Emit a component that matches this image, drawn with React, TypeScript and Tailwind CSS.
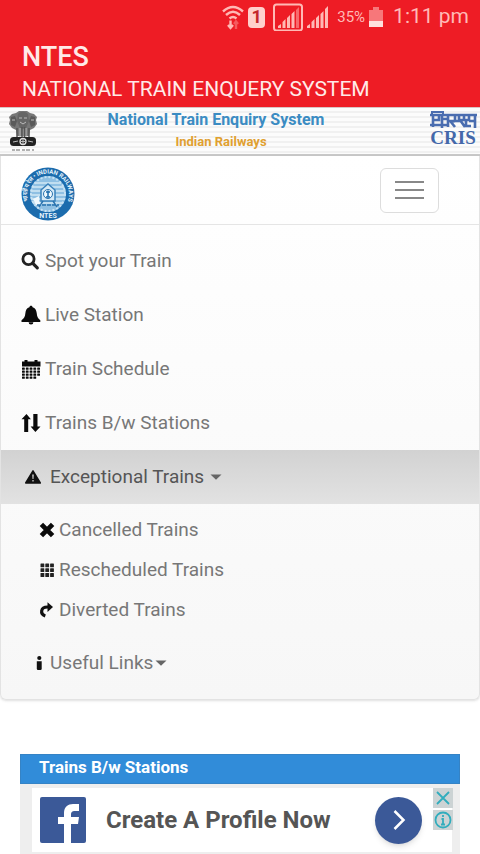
import React from 'react';

interface MenuItem {
  label: string;
  icon: React.ReactNode;
}

const SearchIcon = () => (
  <svg viewBox="0 0 20 20" className="size-5" fill="none" stroke="#222" strokeWidth="2.8">
    <circle cx="7.5" cy="8" r="5.6" />
    <path d="M11.8 12.3 16.3 16.8" strokeWidth="3.2" strokeLinecap="round" />
  </svg>
);

const BellIcon = () => (
  <svg viewBox="0 0 20 20" className="size-5" fill="#0a0a0a">
    <path d="M10 .8c1 0 1.5.6 1.6 1.5C14.2 3 15.3 5 15.7 8c.4 3.6 1 5.5 3.6 7.2v1.700H.5v-1.700C3.300 13.500 4 11.600 4.400 8c.3-3 1.400-5 4-5.700C8.500 1.400 9 .8 10 .8Z" />
    <path d="M7.600 17.200h4.800a2.400 2.200 0 0 1-4.800 0Z" />
  </svg>
);

const CalendarIcon = () => (
  <svg viewBox="0 0 20 20" className="size-5" fill="#0a0a0a">
    <path d="M1 2.500h2.500V1h3v1.500h7V1h3v1.500H19.500V7.500H1Z" />
    {[8.6, 11.6, 14.6, 17.6].map((y) =>
      [1, 4.8, 8.6, 12.4, 16.2].map((x) =>
        y === 17.6 && x > 13 ? null : <rect key={`${x}-${y}`} x={x} y={y} width="2.8" height="2.1" rx="0.5" />
      )
    )}
  </svg>
);

const ArrowsIcon = () => (
  <svg viewBox="0 0 20 20" className="size-5" fill="#0a0a0a">
    <path d="M5.500 1 .5 6.200h2.700V19h4V6.200h2.700ZM12.300 1h4.200v12.600H19.500L14.400 19l-4.800-5.400h2.700Z" />
  </svg>
);

const WarningIcon = () => (
  <svg viewBox="0 0 16 16" className="size-4">
    <path d="M8 1.800 15.300 14H.7Z" fill="#111" stroke="#111" strokeWidth="1.5" strokeLinejoin="round" />
    <path d="M7 5.500h2l-.4 4.500H7.400ZM7.200 11h1.600v1.600H7.200Z" fill="#aaa" />
  </svg>
);

const CrossIcon = () => (
  <svg viewBox="0 0 16 16" className="size-4" stroke="#0a0a0a" strokeWidth="4.8">
    <path d="m2.400 2.400 11.200 11.200M13.600 2.400 2.400 13.600" />
  </svg>
);

const GridIcon = () => (
  <svg viewBox="0 0 16 16" className="size-4" fill="#222">
    {[1.5, 6.3, 11.1].map((y) =>
      [1.5, 6.3, 11.1].map((x) => <rect key={`${x}-${y}`} x={x} y={y} width="3.8" height="3.8" rx="0.5" />)
    )}
  </svg>
);

const DivertIcon = () => (
  <svg viewBox="0 0 16 16" className="size-4">
    <path d="M6.300 14C.8 12 1.500 5 8.500 5h1" fill="none" stroke="#111" strokeWidth="3.2" />
    <path d="M8.500.2 14 5 8.500 9.900Z" fill="#111" />
  </svg>
);

const InfoIcon = () => (
  <svg viewBox="0 0 8 16" className="h-4 w-2" fill="#111">
    <circle cx="4.3" cy="3" r="2.1" />
    <path d="M1.800 6.200H6.700v7.600q0 1.200-1.200 1.200H3q-1.200 0-1.200-1.200Z" />
  </svg>
);

const Caret = () => (
  <svg viewBox="0 0 12 6" className="h-1.5 w-3" fill="#666">
    <path d="M.5.5h11L6 5.800Z" />
  </svg>
);

const mainItems: MenuItem[] = [
  { label: 'Spot your Train', icon: <SearchIcon /> },
  { label: 'Live Station', icon: <BellIcon /> },
  { label: 'Train Schedule', icon: <CalendarIcon /> },
  { label: 'Trains B/w Stations', icon: <ArrowsIcon /> },
];

const exceptionalItems: MenuItem[] = [
  { label: 'Cancelled Trains', icon: <CrossIcon /> },
  { label: 'Rescheduled Trains', icon: <GridIcon /> },
  { label: 'Diverted Trains', icon: <DivertIcon /> },
];

function StatusBar() {
  return (
    <div className="flex h-[34px] items-center justify-end pr-[11px] text-[#ffb9b5]">
      <svg viewBox="0 0 22 26" className="mr-1 h-[26px] w-[22px]" fill="none" stroke="currentColor" strokeWidth="2.4">
        <path d="M1 7.500Q11-1.500 21 7.500M4 11q7-6.500 14 0M7.500 14.500q3.500-3 7 0" />
        <path d="M8.500 16.500v7M6 21l2.500 3 2.500-3" />
        <path d="M14 25v-7M12 20l2-2.500 2 2.500" opacity="0.4" />
      </svg>
      <span className="mr-2 flex h-[21px] w-[17px] items-center justify-center rounded-sm bg-[#ffd0cc] text-lg font-bold text-[#c3272b]">
        1
      </span>
      <svg viewBox="0 0 30 28" className="mr-1 h-7 w-[30px]" fill="currentColor">
        <rect x="1" y="1.5" width="28" height="26" rx="2.5" fill="none" stroke="currentColor" strokeWidth="2" />
        <path d="M5 25v-2l3-2v4ZM9.500 25v-6l3-3v9ZM14 25V15l3-3v13ZM18.500 25V11l3-3v17Z" />
        <path d="M23 25V7l3-3v21Z" opacity="0.5" />
      </svg>
      <svg viewBox="0 0 22 24" className="mr-2 h-6 w-[22px]" fill="currentColor">
        <path d="M0 23v-2l3-2v4ZM4.500 23v-6l3-3v9ZM9 23V13l3-3v13ZM13.500 23V9l3-3v17ZM18 23V4l3-3v22Z" />
      </svg>
      <span className="text-[15px]">35%</span>
      <svg viewBox="0 0 14 22" className="ml-1 h-[22px] w-3.5">
        <path d="M4 1h6v3h4v17H0V4h4Z" fill="#f7777a" />
        <path d="M0 15h14v6H0Z" fill="#ffe0dd" />
      </svg>
      <span className="ml-2.5 text-[21px]">1:11 pm</span>
    </div>
  );
}

function Emblem() {
  return (
    <svg viewBox="0 0 30 42" className="h-[42px] w-[30px]" role="img" aria-label="State emblem">
      <path
        d="M8 3 11 1h8l3 2 4 1 3 3-1 3 1 4-3 4-4 2-1 6H9l-1-6-4-2-3-4 1-4-1-3 3-3Z"
        fill="#777"
      />
      <path d="M10 4c3-3 7-3 10 0l1 7-3 7h-6l-3-7Z" fill="#666" />
      <path d="M3 7l4-1 2 5-2 6-4-2ZM27 7l-4-1-2 5 2 6 4-2Z" fill="#5a5a5a" />
      <path d="M11 8h3M16 8h3M12 12l3 2 3-2M4 10h3M23 10h3M12 18v9M18 18v9M15 19v8" stroke="#bbb" fill="none" />
      <path d="M9 18v9M21 18v9M14 17v10M16.500 17v10" stroke="#555" strokeWidth="1.5" />
      <rect x="2" y="27" width="26" height="9" rx="3.5" fill="#222" />
      <circle cx="15" cy="31.5" r="3" fill="none" stroke="#ddd" strokeWidth="1.3" />
      <path d="M5 32l5-1M20 31l5 1M15 29v5M12.500 31.500h5" stroke="#bbb" />
      <path d="M4 40h22" stroke="#999" strokeWidth="1.5" strokeDasharray="3 1 4 2" />
    </svg>
  );
}

function CrisLogo() {
  return (
    <svg viewBox="0 0 50 40" className="h-10 w-[50px]" role="img" aria-label="CRIS">
      <g fill="none" stroke="#4a6db0" strokeWidth="2.6">
        <path d="M2 5h47M5 5v12M2 15h9M5 10h6V5M14 5v13M14 9h6v6h-9M20 5v12M20 11h7M27 5v6l-4 1 4 5M31 5v6h-4M36 5v5h-4l5 7M41 5v5h-3v6h5M41 11h6M47 5v13" />
        <path d="M4 5V2h11v3" strokeWidth="2" />
      </g>
      <text
        x="25"
        y="34"
        textAnchor="middle"
        className="font-['Liberation_Serif',serif] text-[19px] font-bold"
        fill="#4468aa"
      >
        CRIS
      </text>
    </svg>
  );
}

function NtesLogo() {
  return (
    <svg viewBox="0 0 54 54" className="size-[54px]" role="img" aria-label="NTES Indian Railways">
      <circle cx="27" cy="27" r="26.5" fill="#1c6cad" />
      <circle cx="27" cy="27" r="18" fill="#8fc0e3" />
      <path d="M11 20h32M9.500 24h35M9.500 28h35M10 32h34M12 36h30M14 16h26" stroke="#d2e8f5" strokeWidth="1.5" />
      <circle cx="27" cy="27" r="17" fill="none" stroke="#c8e2f3" strokeWidth="2" strokeDasharray="2 2" />
      <path d="M20 34V23l7-6 7 6v11Z" fill="#d5eaf7" stroke="#3a81ba" strokeWidth="1.5" />
      <circle cx="27" cy="27" r="4.5" fill="#eef8fd" stroke="#2872ae" />
      <path d="M27 23.500v7M25 25h4M25 30h4" stroke="#1c6cad" strokeWidth="1.5" />
      <path d="M12 32l6-3v5l3 4h-6Z" fill="#eff8fd" />
      <path d="M16 38h22M22 34l-4 6M32 34l4 6" stroke="#2872ae" strokeWidth="1.5" strokeDasharray="4 1" />
      <path id="ring" d="M7 34A21 21 0 1 1 47 34" fill="none" />
      <text className="text-[6px] font-bold" fill="#e4f2fb">
        <textPath href="#ring" startOffset="0">
          भारतीय रेल • INDIAN RAILWAYS
        </textPath>
      </text>
      <text x="27" y="51" textAnchor="middle" className="text-[7px] font-bold" fill="#e4f2fb">
        NTES
      </text>
    </svg>
  );
}

function Banner() {
  return (
    <div className="flex h-[49px] border-t border-b-2 border-t-[#d9c5c5] border-b-[#c9c9c9] bg-[repeating-linear-gradient(#fcfcfc_0_3px,#f1f1f1_3px_5px)] pr-0.5 pl-2">
      <div className="pt-0.5">
        <Emblem />
      </div>
      <div className="flex-1 text-center font-bold">
        <h2 className="pt-0.5 text-base leading-5 text-[#3b8cc3]">National Train Enquiry System</h2>
        <p className="pt-0.5 pl-2.5 text-[13px] leading-5 text-[#e0a030]">Indian Railways</p>
      </div>
      <div className="flex w-[84px] justify-end pt-0.5">
        <CrisLogo />
      </div>
    </div>
  );
}

function Navigation() {
  return (
    <nav className="rounded-b-md border border-t-0 border-[#e3e3e3] bg-linear-to-b from-white to-[#f7f7f7] text-[19px] text-[#777] shadow-sm">
      <div className="flex h-[69px] items-center justify-between border-b border-[#e5e5e5] pr-10 pl-5">
        <a href="#home" className="pt-2">
          <NtesLogo />
        </a>
        <button
          type="button"
          aria-label="Toggle navigation"
          className="flex h-[45px] w-[59px] flex-col items-center justify-center gap-1.5 rounded-md border border-[#ddd] bg-white"
        >
          <span className="h-0.5 w-[29px] bg-[#888]" />
          <span className="h-0.5 w-[29px] bg-[#888]" />
          <span className="h-0.5 w-[29px] bg-[#888]" />
        </button>
      </div>

      <ul className="py-[9px]">
        {mainItems.map((item) => (
          <li key={item.label}>
            <a href="#menu" className="flex h-[54px] items-center gap-1 pl-5">
              {item.icon}
              {item.label}
            </a>
          </li>
        ))}
        <li>
          <button
            type="button"
            aria-expanded="true"
            className="flex h-[54px] w-full items-center bg-linear-to-b from-[#d2d2d2] to-[#e2e2e2] pl-6 text-[#555]"
          >
            <WarningIcon />
            <span className="mr-1.5 ml-[9px]">Exceptional Trains</span>
            <Caret />
          </button>
          <ul className="py-1.5">
            {exceptionalItems.map((item) => (
              <li key={item.label}>
                <a href="#exceptional" className="flex h-10 items-center gap-1 pl-[38px]">
                  {item.icon}
                  {item.label}
                </a>
              </li>
            ))}
          </ul>
        </li>
        <li>
          <button type="button" aria-expanded="false" className="flex h-[54px] w-full items-center pl-[34px]">
            <InfoIcon />
            <span className="mr-0.5 ml-[7px]">Useful Links</span>
            <Caret />
          </button>
        </li>
      </ul>
    </nav>
  );
}

function AdBanner() {
  return (
    <div className="relative bg-[#eeeeee] pt-1 pr-2 pb-0.5 pl-3">
      <div className="flex h-16 items-center bg-white pr-[30px] pl-2">
        <svg viewBox="0 0 46 46" className="size-[46px]" role="img" aria-label="Facebook">
          <rect width="46" height="46" rx="2" fill="#3b5998" />
          <path d="M24 46V27h-6v-7h6v-4c0-6 4-9 9-9h6v7h-4c-3 0-4 1-4 4v2h8l-1 7h-7v19Z" fill="#fff" />
        </svg>
        <span className="ml-5 flex-1 text-2xl font-bold text-[#555]">Create A Profile Now</span>
        <button
          type="button"
          aria-label="Open"
          className="flex size-[47px] items-center justify-center rounded-full bg-[#3b5998] shadow-md"
        >
          <svg viewBox="0 0 24 24" className="size-6" fill="none" stroke="#fff" strokeWidth="2.5">
            <path d="m7.500 3 9 9-9 9" />
          </svg>
        </button>
      </div>
      <div className="absolute top-1 right-[7px] flex flex-col gap-0.5">
        <button type="button" aria-label="Close ad" className="size-5 bg-[#ccd3d4]">
          <svg viewBox="0 0 20 20" className="size-5" stroke="#31adbd" strokeWidth="1.8">
            <path d="m4 4 12 12M16 4 4 16" />
          </svg>
        </button>
        <button type="button" aria-label="Ad information" className="size-5 bg-[#ccd3d4]">
          <svg viewBox="0 0 20 20" className="size-5" fill="none" stroke="#31adbd" strokeWidth="1.8">
            <circle cx="10" cy="10" r="7.5" />
            <path d="M10 5v2M8.500 9H10v5M8 14.500h4" />
          </svg>
        </button>
      </div>
    </div>
  );
}

export default function App() {
  return (
    <div className="bg-white font-[Roboto,sans-serif]">
      <header className="bg-[#ee1c25]">
        <StatusBar />
        <div className="px-[22px] pt-[7px] pb-0.5 text-[#ffeae8]">
          <h1 className="text-[27px] leading-8 font-medium">NTES</h1>
          <p className="text-[21px] leading-8">NATIONAL TRAIN ENQUERY SYSTEM</p>
        </div>
      </header>
      <Banner />
      <Navigation />
      <section className="mx-5 mt-[54px]">
        <h2 className="h-[30px] border border-[#3583c5] bg-[#318cd9] pl-[18px] text-[17px] leading-6 font-bold text-white">
          Trains B/w Stations
        </h2>
        <AdBanner />
      </section>
    </div>
  );
}
